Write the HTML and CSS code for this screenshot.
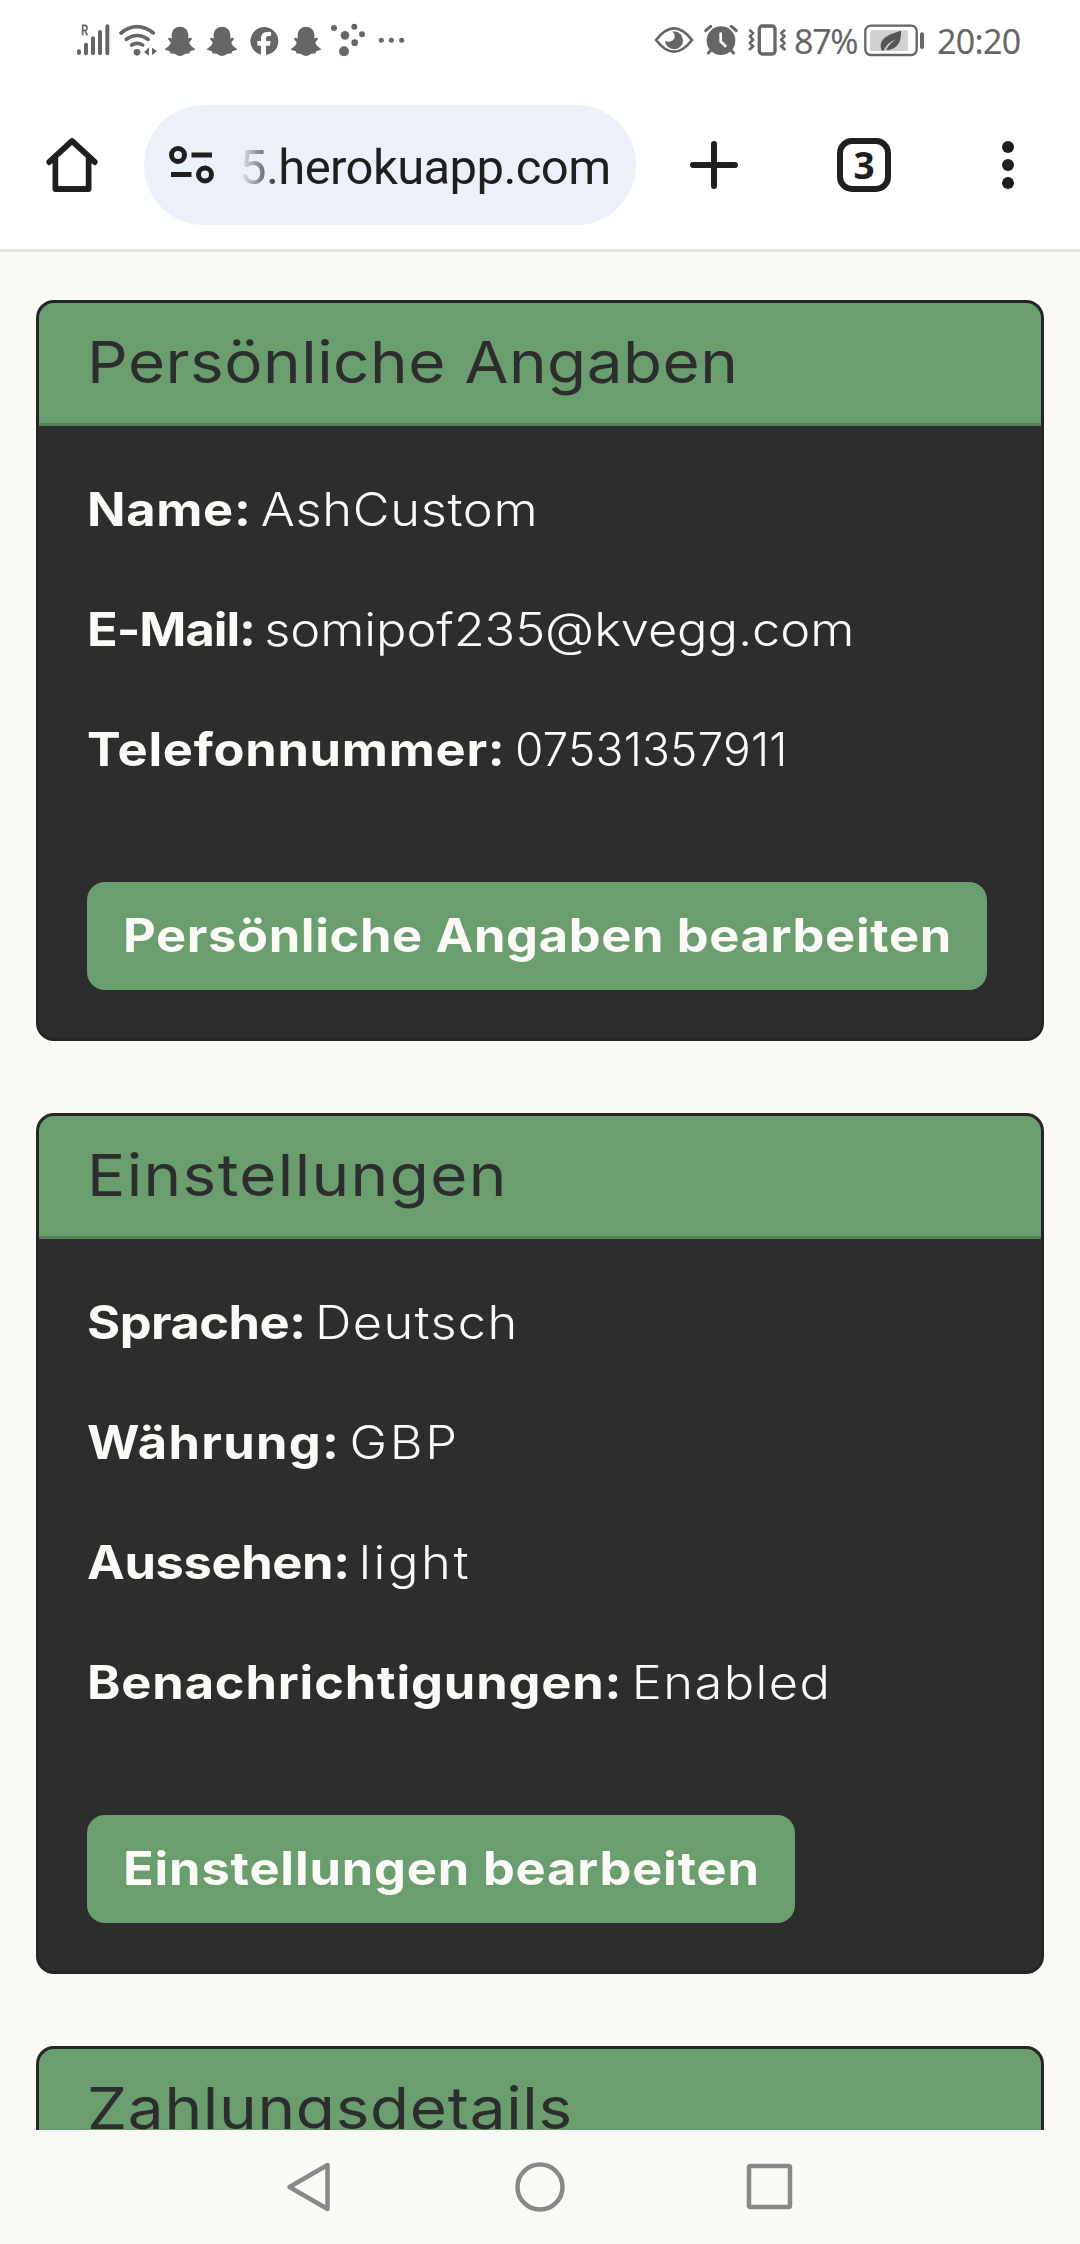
FILE: index.html
```
<!DOCTYPE html>
<html lang="de">
<head>
<meta charset="utf-8">
<title>Persönliche Angaben</title>
<link rel="stylesheet" href="styles.css">
</head>
<body>
<svg class="defs" width="0" height="0" aria-hidden="true">
  <symbol id="ghost" viewBox="0 0 126 180">
    <path d="M54 50C70 50 78 61 79 74V86C82 84 86 82 89 85C91 88 87 92 83 95C81 98 83 103 88 108C92 112 97 115 100 118C96 122 89 122 85 124C83 126 84 130 80 131C76 131 72 130 67 133C63 136 59 138 54 138C49 138 45 136 41 133C36 130 32 131 28 131C24 130 25 126 23 124C19 122 12 122 8 118C11 115 16 112 20 108C25 103 27 98 25 95C21 92 17 88 19 85C22 82 26 84 29 86V74C30 61 38 50 54 50Z"/>
  </symbol>
</svg>

<header class="status">
  <div class="status-group">
    <svg class="s-signal" viewBox="42 0 123 180"><g stroke-width="12" stroke-linecap="round"><path d="M57 124v5M78 104v26M99 85v45M120 66v64M142 49v81"/></g><path d="M68 76V46h6q7 0 7 8 0 7-7 7h-6M75 61l7 15" stroke-width="5" fill="none"/></svg>
    <svg class="s-wifi" viewBox="165 0 141 180"><g fill="none" stroke-width="11" stroke-linecap="round"><path d="M183 69Q231 31 280 69M199 88Q231 65 264 88M215 105Q231 95 248 105"/></g><circle cx="231" cy="127" r="10" stroke="none"/><path d="M252 127l15-15v25zM276 113l15 10-15 13z" stroke="none"/></svg>
    <svg class="s-app" viewBox="0 0 126 180"><use href="#ghost" stroke="none"/></svg>
    <svg class="s-app" viewBox="0 0 126 180"><use href="#ghost" stroke="none"/></svg>
    <svg class="s-app" viewBox="0 0 126 180"><path stroke="none" d="M45 134A42 42 0 1 1 60 135V107H72L74 93H60V86Q60 78 68 78H75V66Q46 61 45 84V93H34V107H45Z"/></svg>
    <svg class="s-app" viewBox="0 0 126 180"><use href="#ghost" stroke="none"/></svg>
    <svg class="s-dots" viewBox="810 0 135 180"><g stroke="none"><circle cx="822" cy="54" r="9"/><circle cx="883" cy="50" r="9"/><circle cx="855" cy="76" r="13"/><circle cx="906" cy="73" r="9"/><circle cx="884" cy="98" r="10"/><circle cx="852" cy="124" r="15"/></g></svg>
    <svg class="s-more" viewBox="945 0 99 180"><g stroke="none"><circle cx="964" cy="91" r="7.5"/><circle cx="994" cy="91" r="7.5"/><circle cx="1025" cy="91" r="7.5"/></g></svg>
  </div>
  <div class="status-group">
    <svg class="s-eye" viewBox="36 0 144 180"><path d="M48 90Q102 20 156 90Q102 160 48 90Z" fill="none" stroke-width="8"/><path stroke="none" d="M103 64A27 27 0 1 1 75 92Q80 96 88 95Q101 93 104 81Q106 72 98 65Z"/></svg>
    <svg class="s-alarm" viewBox="180 0 126 180"><circle cx="243" cy="92" r="43" stroke="none"/><path d="M197 62l15-13M289 62l-15-13M212 122l-7 7M274 122l7 7" stroke-width="9" stroke-linecap="round"/><path d="M242 71v23l14 14" fill="none" class="cut"/></svg>
    <svg class="s-vibrate" viewBox="306 0 144 180"><rect x="358" y="48" width="47" height="84" rx="9" fill="none" stroke-width="10"/><path fill="none" stroke-width="8" d="M328 59l11 10-9 10 9 10-9 10 9 10-12 11M435 59l-11 10 9 10-9 10 9 10-9 10 12 11"/></svg>
    <span class="percent">87%</span>
    <svg class="s-battery" viewBox="666 0 198 180"><rect x="676" y="47" width="154" height="88" rx="16" fill="none" stroke-width="7"/><rect x="690" y="61" width="114" height="62" rx="5" class="charge" stroke="none"/><path stroke="none" class="leaf" d="M783 62C785 95 772 120 738 120Q749 100 769 87Q743 96 730 123L724 119C716 88 738 75 783 62Z"/><path d="M846 73v38" stroke-width="12" stroke-linecap="round"/></svg>
    <span class="clock">20:20</span>
  </div>
</header>

<div class="toolbar">
  <svg class="t-home" viewBox="0 0 60 60"><path d="M6 27L30 6L54 27M12.500 24V54H47.500V24" transform="translate(1.500 0) scale(.95 1)" fill="none" stroke-width="6" stroke-linecap="round" stroke-linejoin="round"/></svg>
  <div class="omnibox">
    <svg class="t-site" viewBox="0 0 46 40"><g fill="none" stroke-width="5"><circle cx="9" cy="10" r="6.500"/><circle cx="36" cy="29.500" r="6.500"/><path d="M22.500 10H43M2 29.500H22.500"/></g></svg>
    <span class="url">5.herokuapp.com</span>
  </div>
  <svg class="t-plus" viewBox="0 0 60 60"><path d="M9 30H51M30 9V51" stroke-width="6" stroke-linecap="round"/></svg>
  <div class="tabs">3</div>
  <svg class="t-menu" viewBox="0 0 60 60"><g stroke="none"><circle cx="30" cy="12" r="6"/><circle cx="30" cy="30" r="6"/><circle cx="30" cy="48" r="6"/></g></svg>
</div>

<main class="page">
  <section class="card">
    <h2 class="card-title"><span class="wide t-personal">Persönliche Angaben</span></h2>
    <div class="card-body">
      <p class="row wide"><strong class="k-name">Name:</strong><span class="v-name">AshCustom</span></p>
      <p class="row wide"><strong class="k-mail">E-Mail:</strong><span class="v-mail">somipof235@kvegg.com</span></p>
      <p class="row wide"><strong class="k-phone">Telefonnummer:</strong><span class="v-phone">07531357911</span></p>
      <a class="button b-personal"><span class="wide">Persönliche Angaben bearbeiten</span></a>
    </div>
  </section>

  <section class="card">
    <h2 class="card-title"><span class="wide t-settings">Einstellungen</span></h2>
    <div class="card-body">
      <p class="row wide"><strong class="k-lang">Sprache:</strong><span class="v-lang">Deutsch</span></p>
      <p class="row wide"><strong class="k-currency">Währung:</strong><span class="v-currency">GBP</span></p>
      <p class="row wide"><strong class="k-theme">Aussehen:</strong><span class="v-theme">light</span></p>
      <p class="row wide"><strong class="k-notify">Benachrichtigungen:</strong><span class="v-notify">Enabled</span></p>
      <a class="button b-settings"><span class="wide">Einstellungen bearbeiten</span></a>
    </div>
  </section>

  <section class="card">
    <h2 class="card-title"><span class="wide t-payment">Zahlungsdetails</span></h2>
    <div class="card-body"></div>
  </section>
</main>

<nav class="system-nav">
  <svg viewBox="0 0 60 60"><path d="M46.500 8V52L8.500 30Z"/></svg>
  <svg viewBox="0 0 60 60"><circle cx="30" cy="30" r="22.500"/></svg>
  <svg viewBox="0 0 60 60"><rect x="10" y="9" width="41" height="41" rx="1.500"/></svg>
</nav>
</body>
</html>
```
FILE: styles.css
```
* { box-sizing: border-box; }

body {
  margin: 0;
  width: 1080px;
  height: 2244px;
  overflow: hidden;
  display: flex;
  flex-direction: column;
  background: #faf9f5;
  font-family: Inter, "Noto Sans", sans-serif;
}

svg { display: block; flex: none; }
.defs { position: absolute; }

/* Status bar */
.status {
  flex: none;
  height: 80px;
  padding: 10px 60px 10px 74px;
  display: flex;
  justify-content: space-between;
  background: #fff;
  color: #666;
  fill: #666;
  stroke: #666;
  font: 400 34px/62px "Noto Sans", sans-serif;
}
.status-group { display: flex; }
.status svg { height: 60px; }
.s-signal { width: 41px; }
.s-wifi { width: 47px; }
.s-app { width: 42px; }
.s-dots { width: 45px; }
.s-more { width: 33px; }
.s-eye, .s-vibrate { width: 48px; }
.s-alarm { width: 42px; }
.s-battery { width: 66px; }
.cut { stroke: #fff; stroke-width: 8px; stroke-linecap: round; }
.charge { fill: #d0d0d0; }
.leaf { fill: #555; }
.percent { width: 68px; margin-left: 4px; letter-spacing: -1.3px; white-space: nowrap; }
.clock { width: 83px; margin-left: 9px; letter-spacing: -0.7px; white-space: nowrap; }

/* Browser toolbar */
.toolbar {
  flex: none;
  height: 172px;
  padding: 25px 42px 24px;
  border-bottom: 3px solid #dfe3df;
  display: flex;
  background: #fff;
  color: #1f1f1f;
  fill: #1f1f1f;
  stroke: #1f1f1f;
}
.t-home, .t-plus, .t-menu { width: 60px; height: 60px; margin-top: 30px; }
.omnibox {
  width: 492px;
  height: 120px;
  margin-left: 42px;
  padding-left: 25px;
  border-radius: 60px;
  display: flex;
  background: #ecf0f9;
}
.t-site { width: 46px; height: 40px; margin-top: 40px; }
.url {
  margin-left: 24px;
  font: 400 49px/125px Roboto, sans-serif;
  letter-spacing: -0.6px;
  white-space: nowrap;
  -webkit-mask-image: linear-gradient(to right, transparent, #000 42px);
  mask-image: linear-gradient(to right, transparent, #000 42px);
}
.t-plus { margin-left: 48px; }
.tabs {
  width: 54px;
  height: 54px;
  margin: 33px 0 0 93px;
  border: 6px solid #1f1f1f;
  border-radius: 15px;
  text-align: center;
  font: 700 37px/41px "Noto Sans", sans-serif;
}
.t-menu { margin-left: 87px; }

/* Account cards */
.page {
  flex: none;
  height: 1878px;
  padding: 48px 36px 0;
  overflow: hidden;
  display: flex;
  flex-direction: column;
  gap: 72px;
}
.card {
  flex: none;
  border: 3px solid #252525;
  border-radius: 18px;
  overflow: hidden;
  background: #2d2d2d;
  color: #fbfaf6;
}
/* Broad letterforms for everything set inside a card */
.wide {
  transform: scaleX(1.1);
  transform-origin: 0 50%;
}
.card-title {
  margin: 0;
  padding: 23px 48px 25px;
  border-bottom: 3px solid #56805a;
  background: #6a9e6f;
  color: #2d2d2d;
  font-size: 58px;
  line-height: 72px;
  font-weight: 430;
}
.card-title .wide { display: block; width: fit-content; }
.card-body { padding: 47px 48px 48px; }
.row {
  width: fit-content;
  margin: 0 0 48px;
  display: flex;
  gap: 8.5px;
  font-size: 46px;
  line-height: 72px;
  font-weight: 330;
  white-space: nowrap;
}
.row strong { font-weight: 700; }
.button {
  display: block;
  height: 108px;
  margin-top: 97px;
  padding: 0 0 2px 36px;
  border-radius: 18px;
  background: #6a9e6f;
  font-size: 46px;
  line-height: 106px;
  font-weight: 700;
  white-space: nowrap;
}
.button .wide { display: block; width: fit-content; }
.b-personal { width: 900px; letter-spacing: 0.58px; }
.b-settings { width: 708px; letter-spacing: 0.74px; }

/* Tracking of each heading, label and value */
.t-personal { letter-spacing: 0.45px; }
.t-settings { letter-spacing: 1.25px; }
.t-payment { letter-spacing: 0.65px; }
.k-name { letter-spacing: 0.6px; }
.v-name { letter-spacing: 0.6px; }
.k-mail { letter-spacing: -0.95px; }
.v-mail { letter-spacing: -0.08px; }
.k-phone { letter-spacing: 0.65px; }
.v-phone { letter-spacing: 0.2px; transform: scaleX(0.909); transform-origin: 0 50%; }
.k-lang { letter-spacing: -0.45px; }
.v-lang { letter-spacing: 1.2px; }
.k-currency { letter-spacing: 1.15px; }
.v-currency { letter-spacing: 2.4px; }
.k-theme { letter-spacing: -0.35px; }
.v-theme { letter-spacing: 2.4px; }
.k-notify { letter-spacing: 0.76px; }
.v-notify { letter-spacing: 1.3px; }

/* Android navigation keys */
.system-nav {
  flex: none;
  height: 114px;
  display: flex;
  justify-content: center;
  align-items: center;
  gap: 169px;
  background: #faf9f5;
}
.system-nav svg {
  width: 60px;
  height: 60px;
  fill: none;
  stroke: #888;
  stroke-width: 4.5px;
  stroke-linejoin: round;
}
```
